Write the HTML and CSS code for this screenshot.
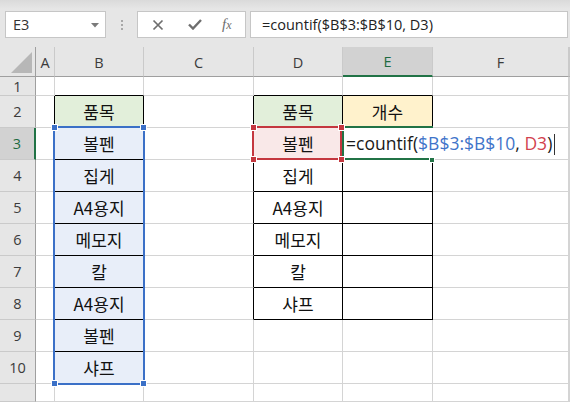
FILE: index.html
```html
<!DOCTYPE html>
<html lang="ko">
<head>
<meta charset="utf-8">
<title>Excel COUNTIF</title>
<link rel="stylesheet" href="styles.css">
</head>
<body>
<div class="app">
  <div class="toolbar">
    <div class="namebox">
      <span class="nb-text">E3</span>
      <svg class="nb-drop" width="8" height="5" viewBox="0 0 8 5"><path d="M0 0H8L4 4.5Z" fill="#7a7a7a"/></svg>
    </div>
    <div class="sep"><i></i><i></i><i></i></div>
    <div class="fbtns">
      <svg class="ic-x" width="12" height="12" viewBox="0 0 12 12"><path d="M1.5 1.5L10.5 10.5M10.5 1.5L1.5 10.5" stroke="#6e6e6e" stroke-width="1.7" fill="none"/></svg>
      <svg class="ic-ok" width="14" height="11" viewBox="0 0 14 11"><path d="M1 5.5L5 9.5L13 1" stroke="#6e6e6e" stroke-width="2.4" fill="none"/></svg>
      <span class="ic-fx">f<span class="fx-x">x</span></span>
    </div>
    <div class="formula">=countif($B$3:$B$10, D3)</div>
  </div>

  <div class="sheet">
    <!-- header row -->
    <div class="corner"><svg width="22" height="22" viewBox="0 0 22 22"><path d="M21 0V21H0Z" fill="#b7b7b7"/></svg></div>
    <div class="ch">A</div>
    <div class="ch">B</div>
    <div class="ch">C</div>
    <div class="ch">D</div>
    <div class="ch sel">E</div>
    <div class="ch">F</div>
    <div class="ch"></div>

    <!-- row 1 -->
    <div class="rh">1</div>
    <div class="c"></div>
    <div class="c bb"></div>
    <div class="c"></div>
    <div class="c bb"></div>
    <div class="c bb"></div>
    <div class="c"></div>
    <div class="c"></div>

    <!-- row 2 -->
    <div class="rh">2</div>
    <div class="c br"></div>
    <div class="c br bb green">품목</div>
    <div class="c br"></div>
    <div class="c br bb green">품목</div>
    <div class="c br bb yellow">개수</div>
    <div class="c"></div>
    <div class="c"></div>

    <!-- row 3 -->
    <div class="rh sel">3</div>
    <div class="c br"></div>
    <div class="c br bb blue">볼펜</div>
    <div class="c br"></div>
    <div class="c br bb pink">볼펜</div>
    <div class="c br bb"></div>
    <div class="c"></div>
    <div class="c"></div>

    <!-- row 4 -->
    <div class="rh">4</div>
    <div class="c br"></div>
    <div class="c br bb blue">집게</div>
    <div class="c br"></div>
    <div class="c br bb">집게</div>
    <div class="c br bb"></div>
    <div class="c"></div>
    <div class="c"></div>

    <!-- row 5 -->
    <div class="rh">5</div>
    <div class="c br"></div>
    <div class="c br bb blue">A4용지</div>
    <div class="c br"></div>
    <div class="c br bb">A4용지</div>
    <div class="c br bb"></div>
    <div class="c"></div>
    <div class="c"></div>

    <!-- row 6 -->
    <div class="rh">6</div>
    <div class="c br"></div>
    <div class="c br bb blue">메모지</div>
    <div class="c br"></div>
    <div class="c br bb">메모지</div>
    <div class="c br bb"></div>
    <div class="c"></div>
    <div class="c"></div>

    <!-- row 7 -->
    <div class="rh">7</div>
    <div class="c br"></div>
    <div class="c br bb blue">칼</div>
    <div class="c br"></div>
    <div class="c br bb">칼</div>
    <div class="c br bb"></div>
    <div class="c"></div>
    <div class="c"></div>

    <!-- row 8 -->
    <div class="rh">8</div>
    <div class="c br"></div>
    <div class="c br bb blue">A4용지</div>
    <div class="c br"></div>
    <div class="c br bb">샤프</div>
    <div class="c br bb"></div>
    <div class="c"></div>
    <div class="c"></div>

    <!-- row 9 -->
    <div class="rh">9</div>
    <div class="c br"></div>
    <div class="c br bb blue">볼펜</div>
    <div class="c"></div>
    <div class="c"></div>
    <div class="c"></div>
    <div class="c"></div>
    <div class="c"></div>

    <!-- row 10 -->
    <div class="rh">10</div>
    <div class="c br"></div>
    <div class="c br bb blue">샤프</div>
    <div class="c"></div>
    <div class="c"></div>
    <div class="c"></div>
    <div class="c"></div>
    <div class="c"></div>

    <!-- row 11 -->
    <div class="rh"></div>
    <div class="c"></div>
    <div class="c"></div>
    <div class="c"></div>
    <div class="c"></div>
    <div class="c"></div>
    <div class="c"></div>
    <div class="c"></div>

    <!-- reference highlight overlays -->
    <div class="ref ref-blue"></div>
    <div class="ref ref-red"></div>
    <div class="active"></div>
    <div class="editor">=countif(<span class="t-blue">$B$3:$B$10</span>, <span class="t-red">D3</span>)<i class="caret"></i></div>

    <span class="hd hd-blue hb1"></span>
    <span class="hd hd-blue hb2"></span>
    <span class="hd hd-blue hb3"></span>
    <span class="hd hd-blue hb4"></span>
    <span class="hd hd-red hr1"></span>
    <span class="hd hd-red hr2"></span>
    <span class="hd hd-red hr3"></span>
    <span class="hd hd-red hr4"></span>
    <span class="hd hd-green hg"></span>
  </div>
</div>
</body>
</html>
```
FILE: styles.css
```css
* { box-sizing: border-box; }
html, body { margin: 0; padding: 0; }
body {
  width: 570px;
  height: 402px;
  overflow: hidden;
  background: #ffffff;
  font-family: "Open Sans", "Noto Sans", sans-serif;
}
.app { width: 570px; height: 402px; overflow: hidden; }

/* ---------- formula toolbar ---------- */
.toolbar {
  height: 47px;
  display: flex;
  align-items: flex-start;
  padding-top: 11px;
  background: linear-gradient(#dadada 0px, #e6e6e6 9px, #e6e6e6 100%);
}
.namebox {
  margin-left: 5px;
  width: 101px;
  height: 27px;
  background: #fff;
  border: 1px solid #c6c6c6;
  display: flex;
  align-items: center;
  justify-content: space-between;
  padding: 0 6px 0 7px;
}
.nb-text { font-size: 14.5px; color: #333; }
.nb-drop { display: block; margin-top: 1px; }
.sep {
  width: 31px;
  height: 27px;
  display: flex;
  flex-direction: column;
  align-items: center;
  justify-content: center;
  gap: 2px;
  padding-left: 1px;
}
.sep i { display: block; width: 2px; height: 2px; background: #a8a8a8; }
.fbtns {
  width: 109px;
  height: 27px;
  background: #fff;
  border: 1px solid #c6c6c6;
  display: flex;
  align-items: center;
  padding-left: 14px;
}
.ic-x { display: block; }
.ic-ok { display: block; margin-left: 24px; }
.ic-fx {
  margin-left: 20px;
  font-family: "Liberation Serif", serif;
  font-style: italic;
  font-size: 15px;
  color: #6e6e6e;
  line-height: 1;
}
.fx-x { font-size: 12px; }
.formula {
  margin-left: 4px;
  width: 318px;
  height: 27px;
  background: #fff;
  border: 1px solid #c6c6c6;
  font-size: 14.5px;
  line-height: 25px;
  color: #222;
  padding-left: 11px;
  white-space: nowrap;
}

/* ---------- sheet grid ---------- */
.sheet {
  position: relative;
  display: grid;
  grid-template-columns: 36px 19px 89px 110px 89px 90px 136px 1fr;
  grid-template-rows: 30px 19px repeat(9, 32px) 18px;
  height: 355px;
}
.corner {
  background: #e6e6e6;
  border-right: 1px solid #9f9f9f;
  border-bottom: 1px solid #9f9f9f;
  display: flex;
  align-items: flex-end;
  justify-content: flex-end;
  padding: 0 2px 2px 0;
}
.corner svg { display: block; }
.ch {
  background: #e6e6e6;
  border-right: 1px solid #cacaca;
  border-bottom: 1px solid #9f9f9f;
  display: flex;
  align-items: center;
  justify-content: center;
  font-size: 14.5px;
  color: #3b3b3b;
  padding-top: 1px;
}
.ch.sel {
  background: #d2d2d2;
  color: #1e6b41;
  border-bottom: 2px solid #217346;
}
.rh {
  background: #e6e6e6;
  border-right: 1px solid #9f9f9f;
  border-bottom: 1px solid #cacaca;
  display: flex;
  align-items: center;
  justify-content: center;
  font-size: 14.5px;
  color: #3b3b3b;
}
.rh.sel {
  background: #d2d2d2;
  color: #1e6b41;
  border-right: 2px solid #217346;
}
.c {
  background: #fff;
  border-right: 1px solid #d4d4d4;
  border-bottom: 1px solid #d4d4d4;
  display: flex;
  align-items: center;
  justify-content: center;
  font-family: "Noto Sans CJK KR", "Noto Sans", sans-serif;
  font-size: 17px;
  color: #111;
  white-space: nowrap;
}
.c.br { border-right-color: #000; }
.c.bb { border-bottom-color: #000; }
.green { background: #e2efda; }
.yellow { background: #fff2cc; }
.blue { background: #e8eef9; }
.pink { background: #f9e8e8; }

/* ---------- formula reference overlays ---------- */
.ref { position: absolute; pointer-events: none; }
.ref-blue {
  left: 53px; top: 79px; width: 92px; height: 259px;
  border: 2px solid #3b70c7;
}
.ref-red {
  left: 252px; top: 79px; width: 90px; height: 34px;
  border: 2px solid #c4373f;
}
.active {
  position: absolute;
  left: 342px; top: 79px; width: 91px; height: 34px;
  border: 2px solid #217346;
  border-right: none;
}
.editor {
  position: absolute;
  left: 344px; top: 81px; height: 30px;
  padding: 0 3px 0 2px;
  background: #fff;
  white-space: pre;
  font-family: "Open Sans", "Noto Sans", sans-serif;
  font-size: 17.5px;
  line-height: 30px;
  color: #1a1a1a;
}
.t-blue { color: #3f74c9; }
.t-red { color: #d2424e; }
.caret {
  display: inline-block;
  width: 1px;
  height: 21px;
  margin-left: 2px;
  vertical-align: -5px;
  background: #333;
}

.hd {
  position: absolute;
  width: 7px; height: 7px;
  border: 1px solid #fff;
}
.hd-blue { background: #3b70c7; }
.hd-red { background: #c4373f; }
.hd-green { background: #217346; width: 6px; height: 6px; }
.hb1 { left: 51px;  top: 77px; }
.hb2 { left: 140px; top: 77px; }
.hb3 { left: 51px;  top: 333px; }
.hb4 { left: 140px; top: 333px; }
.hr1 { left: 250px; top: 77px; }
.hr2 { left: 338px; top: 77px; }
.hr3 { left: 250px; top: 109px; }
.hr4 { left: 338px; top: 109px; }
.hg  { left: 429px; top: 110px; }
```
